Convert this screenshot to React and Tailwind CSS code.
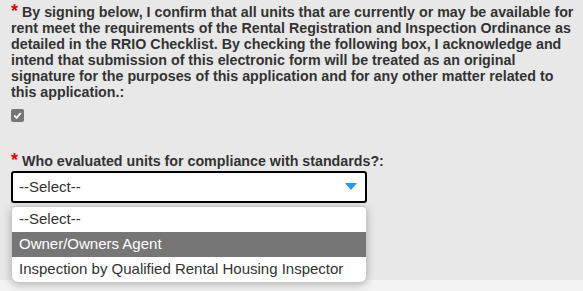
import React from 'react';

const options = ['--Select--', 'Owner/Owners Agent', 'Inspection by Qualified Rental Housing Inspector'];

const App = () => {
  return (
    <div className="w-[583px] h-[291px] overflow-hidden bg-[#e8e8e8] font-['Liberation_Sans',Arial,sans-serif] text-[#333]">
      <div className="h-[280px] pl-[11px] pr-[4px] pt-[3px]">
        {/* Agreement */}
        <p className="text-[14.25px] leading-[16px] font-bold">
          <span className="text-[#e00] text-[18px] leading-[16px] mr-[4px]">*</span>
          By signing below, I confirm that all units that are currently or may be available for rent meet the requirements of the Rental Registration and Inspection Ordinance as detailed in the RRIO Checklist. By checking the following box, I acknowledge and intend that submission of this electronic form will be treated as an original signature for the purposes of this application and for any other matter related to this application.:
        </p>
        <div className="mt-[9px] w-[13px] h-[13px] rounded-[2px] bg-[#767676] flex items-center justify-center">
          <svg width="9" height="9" viewBox="0 0 10 10">
            <path d="M1.5 5.2 L4 7.6 L8.6 2.2" fill="none" stroke="white" strokeWidth="2" />
          </svg>
        </div>

        {/* Who evaluated */}
        <p className="mt-[30px] text-[14.25px] leading-[16px] font-bold">
          <span className="text-[#e00] text-[18px] leading-[16px] mr-[4px]">*</span>
          Who evaluated units for compliance with standards?:
        </p>
        <div className="relative mt-[2px] w-[356px]">
          <div className="h-[32px] border-2 border-black rounded-[3px] bg-white flex items-center justify-between pl-[6px] pr-[8px]">
            <span className="text-[15px] text-[#333] font-normal">--Select--</span>
            <svg width="12" height="8" viewBox="0 0 12 8">
              <path d="M0 0 H12 L6 7 Z" fill="#2196f3" />
            </svg>
          </div>
          <ul className="mt-[3px] bg-white border border-[#c8c8c8] rounded-b-[7px] rounded-t-[4px] shadow-[0_2px_8px_rgba(0,0,0,0.25)] overflow-hidden">
            {options.map((o, i) => (
              <li
                key={o}
                className={`h-[25px] flex items-center px-[7px] text-[15px] ${
                  i === 1 ? 'bg-[#767676] text-white' : 'text-[#333]'
                }`}
              >
                {o}
              </li>
            ))}
          </ul>
        </div>
      </div>
      <div className="h-[11px] bg-[#f3f3f3]"></div>
    </div>
  );
};

export default App;
